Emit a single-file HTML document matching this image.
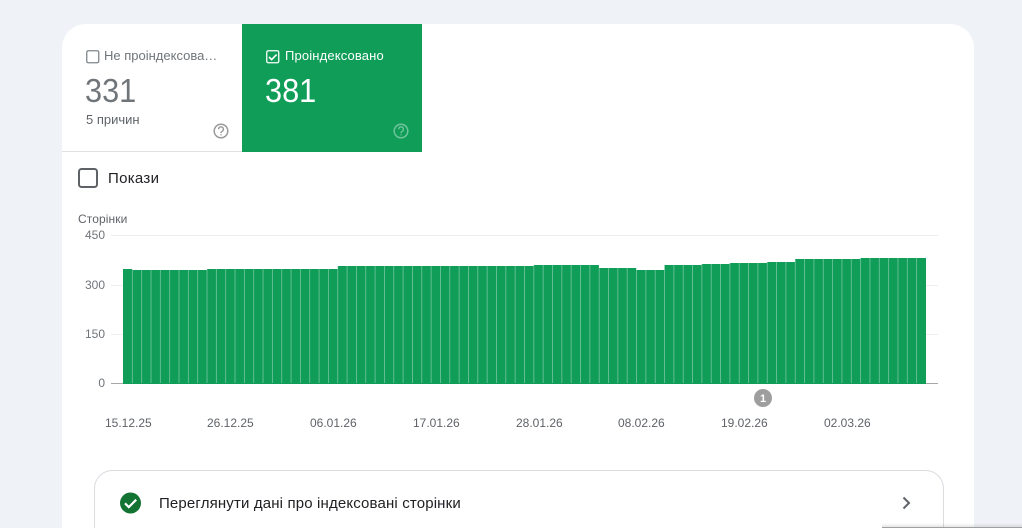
<!DOCTYPE html>
<html><head><meta charset="utf-8"><style>
html,body{margin:0;padding:0;width:1022px;height:528px;overflow:hidden;background:#eff3f8;font-family:"Liberation Sans",sans-serif}
#w{position:relative;width:1022px;height:528px;overflow:hidden}
.a{position:absolute;white-space:nowrap}
</style></head><body><div id="w">
<div class="a" style="left:62px;top:24px;width:912px;height:504px;background:#fff;border-radius:24px 24px 0 0"></div>
<div class="a" style="left:242px;top:24px;width:180px;height:128px;background:#0f9d58"></div>
<div class="a" style="left:62px;top:151px;width:180px;height:1px;background:#e0e0e0"></div>
<svg class="a" style="left:0;top:0;display:block" width="1022" height="528" viewBox="0 0 1022 528">
<rect x="86.75" y="50.75" width="12" height="12" rx="1.5" fill="none" stroke="#80868b" stroke-width="1.3"/>
<rect x="266.75" y="50.75" width="12" height="12" rx="1.5" fill="none" stroke="#fff" stroke-width="1.3"/>
<path d="M269 57l2.6 2.6 5-5" fill="none" stroke="#fff" stroke-width="1.6"/>
<rect x="79" y="169" width="18" height="18" rx="2.5" fill="none" stroke="#5f6368" stroke-width="2"/>
<circle cx="221" cy="131" r="6.8" fill="none" stroke="#9a9a9a" stroke-width="1.5"/>
<path d="M218.6 129.2a2.4 2.4 0 1 1 3.6 2.1c-.8.5-1.2.9-1.2 1.8M221 134.2v1.2" fill="none" stroke="#9a9a9a" stroke-width="1.4"/>
<circle cx="401" cy="131" r="6.8" fill="none" stroke="#6fc49b" stroke-width="1.5"/>
<path d="M398.6 129.2a2.4 2.4 0 1 1 3.6 2.1c-.8.5-1.2.9-1.2 1.8M401 134.2v1.2" fill="none" stroke="#6fc49b" stroke-width="1.4"/>
<g fill="#eeeeee"><rect x="111" y="235" width="827" height="1"/><rect x="111" y="285" width="827" height="1"/><rect x="111" y="334" width="827" height="1"/></g>
<rect x="111" y="383" width="827" height="1" fill="#a8a8a8"/>
<path d="M123 384V269H132.33V270H207V269H337.67V266H533.67V265H599V268H636.33V270H664.33V265H701.67V264H729.67V263H767V262H795V259H860.33V258H926V384Z" fill="#0f9d58"/>
<line x1="131.9" y1="320.5" x2="918" y2="320.5" stroke="#fff" stroke-opacity=".4" stroke-width="125" stroke-dasharray="0.85 8.487"/>
<circle cx="763" cy="398" r="9" fill="#9e9e9e"/>
<text x="763" y="402" font-family="Liberation Sans" font-size="11" font-weight="700" fill="#fff" text-anchor="middle">1</text>
<path d="M94.5 528V488.5a18 18 0 0 1 18-18H925.5a18 18 0 0 1 18 18V528" fill="none" stroke="#dadce0"/>
<circle cx="130.5" cy="503" r="10.5" fill="#137333"/>
<path d="M125 503.3l3.8 3.8 7.4-7.4" fill="none" stroke="#fff" stroke-width="2.2"/>
<path d="M903.5 497.5l5.5 5.5-5.5 5.5" fill="none" stroke="#5f6368" stroke-width="2"/>
</svg>
<div class="a" style="left:104px;top:48px;font-size:13px;line-height:16px;color:#70757a">Не проіндексова…</div>
<div class="a" style="left:285px;top:48px;font-size:13px;line-height:16px;color:#fff;letter-spacing:.15px">Проіндексовано</div>
<div class="a" style="left:85px;top:71px;font-size:33px;line-height:40px;color:#70757a;transform:scaleX(.93);transform-origin:0 0">331</div>
<div class="a" style="left:265px;top:71px;font-size:33px;line-height:40px;color:#fff;transform:scaleX(.93);transform-origin:0 0">381</div>
<div class="a" style="left:86px;top:112px;font-size:13px;line-height:16px;color:#5f6368">5 причин</div>
<div class="a" style="left:108px;top:170px;font-size:15px;line-height:18px;color:#202124;letter-spacing:.3px">Покази</div>
<div class="a" style="left:78px;top:212px;font-size:12px;line-height:15px;color:#5f6368;letter-spacing:.1px">Сторінки</div>
<div class="a" style="left:65px;width:40px;top:228px;text-align:right;font-size:12px;line-height:15px;color:#70757a">450</div>
<div class="a" style="left:65px;width:40px;top:278px;text-align:right;font-size:12px;line-height:15px;color:#70757a">300</div>
<div class="a" style="left:65px;width:40px;top:327px;text-align:right;font-size:12px;line-height:15px;color:#70757a">150</div>
<div class="a" style="left:65px;width:40px;top:376px;text-align:right;font-size:12px;line-height:15px;color:#70757a">0</div>
<div class="a" style="left:105px;top:416px;font-size:12px;line-height:15px;color:#5f6368">15.12.25</div>
<div class="a" style="left:207px;top:416px;font-size:12px;line-height:15px;color:#5f6368">26.12.25</div>
<div class="a" style="left:310px;top:416px;font-size:12px;line-height:15px;color:#5f6368">06.01.26</div>
<div class="a" style="left:413px;top:416px;font-size:12px;line-height:15px;color:#5f6368">17.01.26</div>
<div class="a" style="left:516px;top:416px;font-size:12px;line-height:15px;color:#5f6368">28.01.26</div>
<div class="a" style="left:618px;top:416px;font-size:12px;line-height:15px;color:#5f6368">08.02.26</div>
<div class="a" style="left:721px;top:416px;font-size:12px;line-height:15px;color:#5f6368">19.02.26</div>
<div class="a" style="left:824px;top:416px;font-size:12px;line-height:15px;color:#5f6368">02.03.26</div>
<div class="a" style="left:159px;top:495px;font-size:15px;line-height:17px;color:#202124;letter-spacing:.15px">Переглянути дані про індексовані сторінки</div>
<div class="a" style="left:882px;top:527px;width:140px;height:1px;background:#a0a0a0"></div>
<div class="a" style="left:882px;top:523px;width:140px;height:4px;background:linear-gradient(rgba(0,0,0,0),rgba(0,0,0,.1))"></div>
</div></body></html>
